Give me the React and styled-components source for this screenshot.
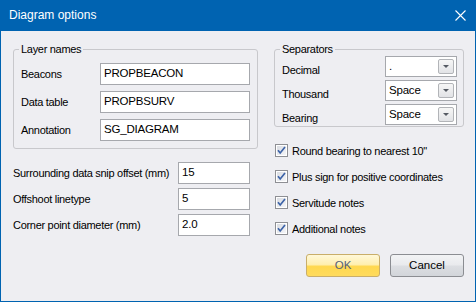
import React from "react";
import styled, { createGlobalStyle, css } from "styled-components";

const GlobalStyle = createGlobalStyle`
  html, body {
    margin: 0;
    padding: 0;
    background: #ffffff;
  }
  * {
    box-sizing: border-box;
  }
`;

const uiFont = `"Liberation Sans", Arial, sans-serif`;

const Window = styled.div`
  width: 476px;
  height: 302px;
  border: 1px solid #0063b1;
  border-top: 0;
  background: #eeeef2;
  font-family: ${uiFont};
  display: flex;
  flex-direction: column;
`;

const TitleBar = styled.div`
  height: 31px;
  background: #0063b1;
  color: #ffffff;
  display: flex;
  align-items: center;
  justify-content: space-between;
  padding: 0 9px 1px 8px;
  font-size: 12px;
  flex-shrink: 0;
`;

const CloseIcon = () => (
  <svg width="11" height="11" viewBox="0 0 11 11">
    <path d="M0.5 0.5 L10.5 10.5 M10.5 0.5 L0.5 10.5" stroke="#ffffff" strokeWidth="1.1" />
  </svg>
);

const Body = styled.div`
  flex: 1;
  display: flex;
  gap: 16px;
  padding: 12px 11px 0 12px;
  font-size: 11px;
  letter-spacing: -0.3px;
  color: #000000;
`;

const Column = styled.div`
  width: ${(props) => props.width}px;
  display: flex;
  flex-direction: column;
`;

const Group = styled.fieldset`
  margin: 0;
  border: 1px solid #c8c8cc;
  border-radius: 3px;
  padding: ${(props) => props.padding};
  width: 100%;
`;

const Legend = styled.legend`
  padding: 0 2px;
  margin-left: -2px;
  line-height: 13px;
  font-size: 11px;
`;

const FormGrid = styled.div`
  display: grid;
  grid-template-columns: ${(props) => props.columns};
  row-gap: ${(props) => props.gap}px;
  align-items: center;
  ${(props) =>
    props.offset &&
    css`
      margin-top: ${props.offset}px;
    `}
`;

const Label = styled.span`
  white-space: nowrap;
  ${(props) =>
    props.low &&
    css`
      padding-top: 7px;
    `}
`;

const TextBox = styled.div`
  height: 22px;
  background: #ffffff;
  border: 1px solid #a6a8ad;
  padding: 0 3px;
  display: flex;
  align-items: center;
  padding-bottom: 3px;
  font-size: 11.5px;
  letter-spacing: -0.2px;
`;

const Combo = styled.div`
  height: 21px;
  background: #ffffff;
  border: 1px solid #a6a8ad;
  display: flex;
  align-items: center;
  justify-content: space-between;
  padding: 0 2px 0 3px;
  font-size: 11.5px;
  letter-spacing: -0.2px;
`;

const ComboValue = styled.span`
  padding-bottom: 2px;
`;

const DropButton = styled.span`
  width: 16px;
  height: 15px;
  border: 1px solid #b2b4b8;
  border-radius: 2px;
  background: linear-gradient(#f6f6f6, #e2e3e6);
  display: flex;
  align-items: center;
  justify-content: center;
  &::after {
    content: "";
    border-left: 3px solid transparent;
    border-right: 3px solid transparent;
    border-top: 3px solid #555a63;
  }
`;

const Checks = styled.div`
  display: flex;
  flex-direction: column;
  gap: 9px;
  margin-top: 15px;
  padding-left: 1px;
`;

const CheckRow = styled.label`
  display: flex;
  align-items: center;
  gap: 4px;
  height: 17px;
  white-space: nowrap;
`;

const CheckBox = () => (
  <svg width="13" height="13" viewBox="0 0 13 13">
    <defs>
      <linearGradient id="cbfill" x1="0" y1="0" x2="1" y2="1">
        <stop offset="0" stopColor="#d9dce2" />
        <stop offset="1" stopColor="#f4f5f8" />
      </linearGradient>
    </defs>
    <rect x="0.5" y="0.5" width="12" height="12" fill="#ffffff" stroke="#8e8f94" />
    <rect x="2" y="2" width="9" height="9" fill="url(#cbfill)" />
    <path d="M3 6.2 L5.2 9 L10 3" fill="none" stroke="#3d63a8" strokeWidth="1.7" />
  </svg>
);

const Buttons = styled.div`
  display: flex;
  justify-content: flex-end;
  gap: 10px;
  margin-top: 17px;
`;

const Button = styled.button`
  width: 74px;
  height: 23px;
  border-radius: 3px;
  font-family: ${uiFont};
  font-size: 11.5px;
  padding: 0 0 2px;
  border: 1px solid #8b8d92;
  color: #000000;
  background: linear-gradient(#f2f3f5 0%, #e9eaed 48%, #dcdee2 52%, #d2d5da 100%);
  ${(props) =>
    props.primary &&
    css`
      border-color: #c9ae6a;
      color: #55607a;
      background: linear-gradient(#fff8d9 0%, #ffefb0 45%, #ffd84f 55%, #ffdb5e 100%);
    `}
`;

const layerRows = [
  ["Beacons", "PROPBEACON"],
  ["Data table", "PROPBSURV"],
  ["Annotation", "SG_DIAGRAM"],
];

const fieldRows = [
  ["Surrounding data snip offset (mm)", "15"],
  ["Offshoot linetype", "5"],
  ["Corner point diameter (mm)", "2.0"],
];

const separatorRows = [
  ["Decimal", "."],
  ["Thousand", "Space"],
  ["Bearing", "Space"],
];

const checkRows = [
  'Round bearing to nearest 10"',
  "Plus sign for positive coordinates",
  "Servitude notes",
  "Additional notes",
];

export default function App() {
  return (
    <>
      <GlobalStyle />
      <Window>
        <TitleBar>
          <span>Diagram options</span>
          <CloseIcon />
        </TitleBar>
        <Body>
          <Column width={245}>
            <Group padding="7px 7px 7px 7px">
              <Legend>Layer names</Legend>
              <FormGrid columns="79px 150px" gap={6}>
                {layerRows.map(([label, value]) => (
                  <React.Fragment key={label}>
                    <Label>{label}</Label>
                    <TextBox>{value}</TextBox>
                  </React.Fragment>
                ))}
              </FormGrid>
            </Group>
            <FormGrid columns="165px 72px" gap={4} offset={13}>
              {fieldRows.map(([label, value]) => (
                <React.Fragment key={label}>
                  <Label>{label}</Label>
                  <TextBox>{value}</TextBox>
                </React.Fragment>
              ))}
            </FormGrid>
          </Column>
          <Column width={190}>
            <Group padding="0 6px 1px 7px">
              <Legend>Separators</Legend>
              <FormGrid columns="103px 72px" gap={3}>
                {separatorRows.map(([label, value]) => (
                  <React.Fragment key={label}>
                    <Label low>{label}</Label>
                    <Combo>
                      <ComboValue>{value}</ComboValue>
                      <DropButton />
                    </Combo>
                  </React.Fragment>
                ))}
              </FormGrid>
            </Group>
            <Checks>
              {checkRows.map((text) => (
                <CheckRow key={text}>
                  <CheckBox />
                  <span>{text}</span>
                </CheckRow>
              ))}
            </Checks>
            <Buttons>
              <Button primary>OK</Button>
              <Button>Cancel</Button>
            </Buttons>
          </Column>
        </Body>
      </Window>
    </>
  );
}
